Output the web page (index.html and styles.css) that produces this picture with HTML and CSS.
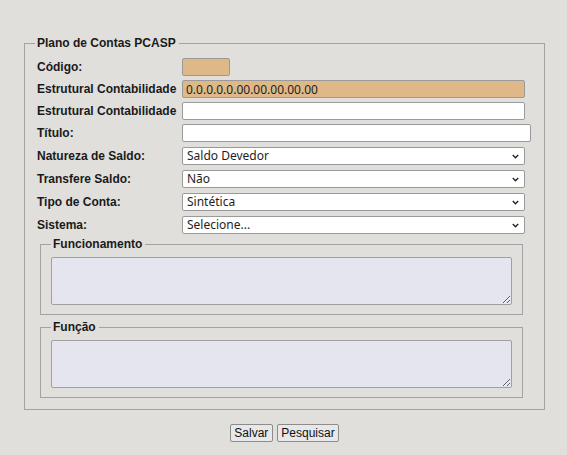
FILE: index.html
```html
<!DOCTYPE html>
<html lang="pt-BR">
<head>
<meta charset="utf-8">
<title>Plano de Contas PCASP</title>
<link rel="stylesheet" href="styles.css">
</head>
<body>
<div class="page">
  <fieldset class="main">
    <legend>Plano de Contas PCASP</legend>
    <div class="row"><label class="lbl">Código:</label><input class="ctl ro w-code" type="text" readonly></div>
    <div class="row"><label class="lbl">Estrutural Contabilidade</label><input class="ctl ro w-std" type="text" value="0.0.0.0.0.00.00.00.00.00" readonly></div>
    <div class="row"><label class="lbl">Estrutural Contabilidade</label><input class="ctl w-std" type="text"></div>
    <div class="row"><label class="lbl">Título:</label><input class="ctl w-wide" type="text"></div>
    <div class="row sel"><label class="lbl">Natureza de Saldo:</label><span class="selwrap"><select class="ctl w-std"><option>Saldo Devedor</option></select><svg class="chev" width="7" height="5" viewBox="0 0 7 5"><path d="M0.8 1 L3.5 3.7 L6.2 1" fill="none" stroke="#222" stroke-width="1.4"/></svg></span></div>
    <div class="row sel"><label class="lbl">Transfere Saldo:</label><span class="selwrap"><select class="ctl w-std"><option>Não</option></select><svg class="chev" width="7" height="5" viewBox="0 0 7 5"><path d="M0.8 1 L3.5 3.7 L6.2 1" fill="none" stroke="#222" stroke-width="1.4"/></svg></span></div>
    <div class="row sel"><label class="lbl">Tipo de Conta:</label><span class="selwrap"><select class="ctl w-std"><option>Sintética</option></select><svg class="chev" width="7" height="5" viewBox="0 0 7 5"><path d="M0.8 1 L3.5 3.7 L6.2 1" fill="none" stroke="#222" stroke-width="1.4"/></svg></span></div>
    <div class="row sel"><label class="lbl">Sistema:</label><span class="selwrap"><select class="ctl w-std"><option>Selecione...</option></select><svg class="chev" width="7" height="5" viewBox="0 0 7 5"><path d="M0.8 1 L3.5 3.7 L6.2 1" fill="none" stroke="#222" stroke-width="1.4"/></svg></span></div>
    <fieldset class="sub first">
      <legend>Funcionamento</legend>
      <textarea class="area"></textarea>
    </fieldset>
    <fieldset class="sub">
      <legend>Função</legend>
      <textarea class="area"></textarea>
    </fieldset>
  </fieldset>
  <div class="actions">
    <button class="btn" type="button">Salvar</button>
    <button class="btn" type="button">Pesquisar</button>
  </div>
</div>
</body>
</html>
```

FILE: styles.css
```css
html, body {
  margin: 0;
  background: #e0dfdc;
}
body {
  font-family: "Liberation Sans", Arial, sans-serif;
  font-size: 12px;
  color: #222;
}
.page {
  padding: 36px 0 0 24px;
  width: 521px;
}
fieldset {
  box-sizing: border-box;
  margin: 0;
  border: 1px solid #a3a3a3;
}
legend {
  font-weight: bold;
  font-size: 12px;
  line-height: 14px;
  padding: 0 3px 0 2px;
  color: #1a1a1a;
}
.main {
  width: 521px;
  padding: 6px 0 11px 12px;
}
.main > legend {
  margin-left: -2px;
}
.row {
  display: flex;
  align-items: center;
  height: 22px;
}
.row.sel {
  height: 23px;
}
.lbl {
  flex: 0 0 145px;
  font-weight: bold;
  white-space: nowrap;
  color: #1a1a1a;
}
.ctl {
  box-sizing: border-box;
  height: 18px;
  margin: 0;
  border: 1px solid #9a9a9a;
  border-radius: 2px;
  background: #fff;
  font-family: "Noto Sans", sans-serif;
  font-size: 12px;
  color: #1e1e1e;
  padding: 0 3px;
}
.selwrap {
  position: relative;
  display: inline-flex;
}
select.ctl {
  appearance: none;
  -webkit-appearance: none;
  padding: 0 16px 0 4px;
  line-height: 16px;
}
.chev {
  position: absolute;
  right: 6px;
  top: 7px;
  pointer-events: none;
}
.ro {
  background: #deb887;
}
.w-code { width: 48px; }
.w-std { width: 343px; }
.w-wide { width: 349px; }
.sub {
  width: 483px;
  margin-left: 3px;
  padding: 6px 10px 9px 10px;
}
.sub.first {
  margin-top: 1px;
}
.sub + .sub {
  margin-top: 5px;
}
.area {
  display: block;
  box-sizing: border-box;
  width: 461px;
  height: 48px;
  margin: 0;
  border: 1px solid #a0a0a0;
  border-radius: 2px;
  background: #e5e5f0;
  font-family: "Noto Sans", sans-serif;
  font-size: 12px;
}
.actions {
  display: flex;
  justify-content: center;
  gap: 4px;
  margin-top: 14px;
}
.btn {
  box-sizing: border-box;
  height: 18px;
  margin: 0;
  padding: 0 3.5px;
  font-family: "Liberation Sans", Arial, sans-serif;
  font-size: 12px;
  color: #111;
  background: #e8e8e8;
  border: 1px solid #8c8c8c;
  border-radius: 2px;
}
```
